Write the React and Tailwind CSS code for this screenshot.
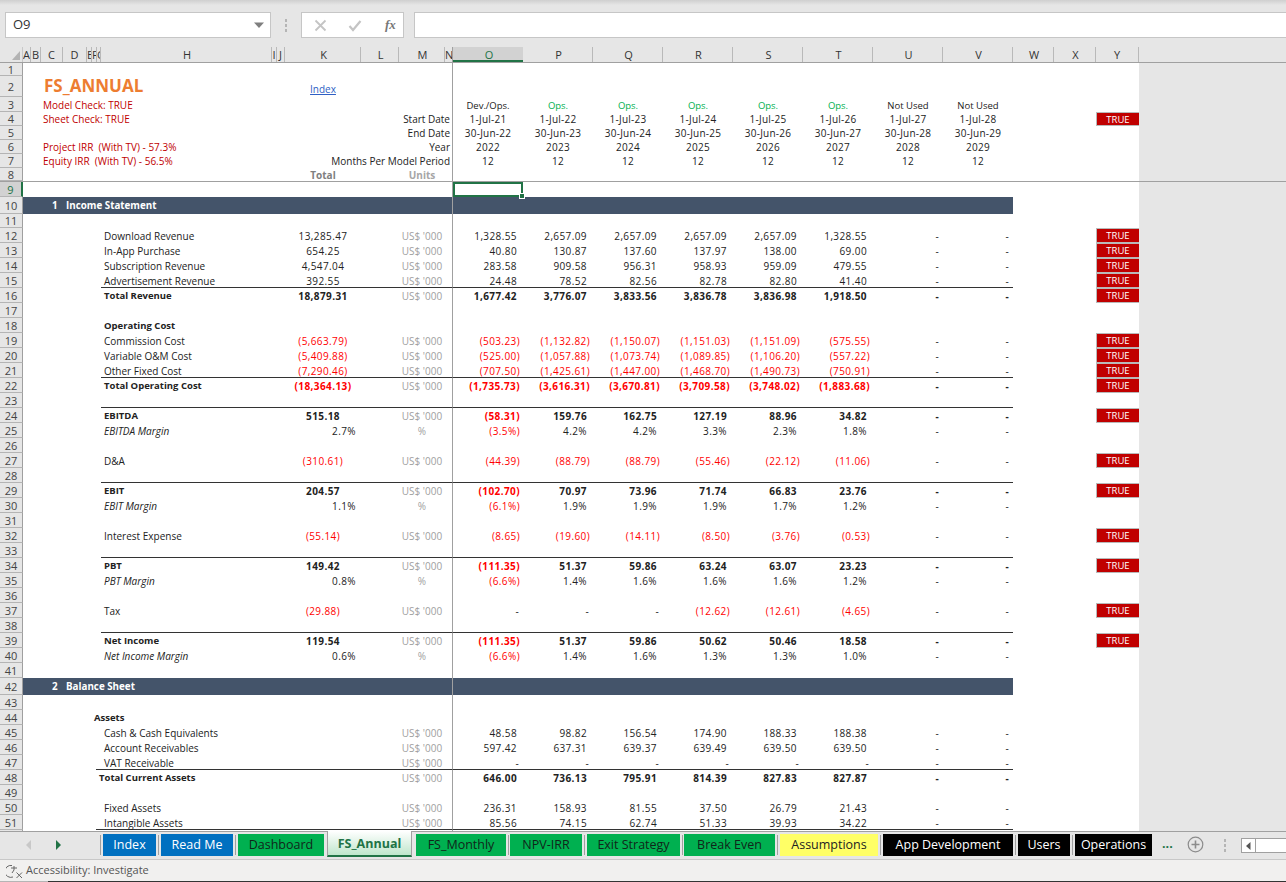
import React from "react";

const GRID = "grid grid-rows-[minmax(0,1fr)] grid-cols-[23px_262px_76px_38px_46px_8px_repeat(8,70px)_83px_43px_1fr]";
const HEADCOLS = "grid grid-cols-[23px_8px_10px_22px_24px_5px_5px_4px_171px_5px_8px_76px_38px_46px_8px_repeat(8,70px)_41px_42px_43px_1fr]";
const LETTERS = ["A","B","C","D","E","F","G","H","I","J","K","L","M","N","O","P","Q","R","S","T","U","V","W","X","Y"];
const NUM = "tracking-[0.4px]";

const U = "US$ '000";
const R = (n, label, total, vals, o = {}) => ({ n, label, total, vals, unit: U, ...o });

const rows = [
  { n: 11, h: 14 },
  R(12, "Download Revenue", "13,285.47", ["1,328.55","2,657.09","2,657.09","2,657.09","2,657.09","1,328.55"], { chk: 1 }),
  R(13, "In-App Purchase", "654.25", ["40.80","130.87","137.60","137.97","138.00","69.00"], { chk: 1 }),
  R(14, "Subscription Revenue", "4,547.04", ["283.58","909.58","956.31","958.93","959.09","479.55"], { chk: 1 }),
  R(15, "Advertisement Revenue", "392.55", ["24.48","78.52","82.56","82.78","82.80","41.40"], { chk: 1, rule: 1 }),
  R(16, "Total Revenue", "18,879.31", ["1,677.42","3,776.07","3,833.56","3,836.78","3,836.98","1,918.50"], { chk: 1, bold: 1 }),
  { n: 17 },
  { n: 18, label: "Operating Cost", bold: 1 },
  R(19, "Commission Cost", "(5,663.79)", ["(503.23)","(1,132.82)","(1,150.07)","(1,151.03)","(1,151.09)","(575.55)"], { chk: 1 }),
  R(20, "Variable O&M Cost", "(5,409.88)", ["(525.00)","(1,057.88)","(1,073.74)","(1,089.85)","(1,106.20)","(557.22)"], { chk: 1 }),
  R(21, "Other Fixed Cost", "(7,290.46)", ["(707.50)","(1,425.61)","(1,447.00)","(1,468.70)","(1,490.73)","(750.91)"], { chk: 1, rule: 1 }),
  R(22, "Total Operating Cost", "(18,364.13)", ["(1,735.73)","(3,616.31)","(3,670.81)","(3,709.58)","(3,748.02)","(1,883.68)"], { chk: 1, bold: 1 }),
  { n: 23, rule: 1 },
  R(24, "EBITDA", "515.18", ["(58.31)","159.76","162.75","127.19","88.96","34.82"], { chk: 1, bold: 1 }),
  R(25, "EBITDA Margin", "2.7%", ["(3.5%)","4.2%","4.2%","3.3%","2.3%","1.8%"], { margin: 1 }),
  { n: 26 },
  R(27, "D&A", "(310.61)", ["(44.39)","(88.79)","(88.79)","(55.46)","(22.12)","(11.06)"], { chk: 1 }),
  { n: 28, rule: 1 },
  R(29, "EBIT", "204.57", ["(102.70)","70.97","73.96","71.74","66.83","23.76"], { chk: 1, bold: 1 }),
  R(30, "EBIT Margin", "1.1%", ["(6.1%)","1.9%","1.9%","1.9%","1.7%","1.2%"], { margin: 1 }),
  { n: 31 },
  R(32, "Interest Expense", "(55.14)", ["(8.65)","(19.60)","(14.11)","(8.50)","(3.76)","(0.53)"], { chk: 1 }),
  { n: 33, rule: 1 },
  R(34, "PBT", "149.42", ["(111.35)","51.37","59.86","63.24","63.07","23.23"], { chk: 1, bold: 1 }),
  R(35, "PBT Margin", "0.8%", ["(6.6%)","1.4%","1.6%","1.6%","1.6%","1.2%"], { margin: 1 }),
  { n: 36 },
  R(37, "Tax", "(29.88)", ["-","-","-","(12.62)","(12.61)","(4.65)"], { chk: 1 }),
  { n: 38, rule: 1 },
  R(39, "Net Income", "119.54", ["(111.35)","51.37","59.86","50.62","50.46","18.58"], { chk: 1, bold: 1 }),
  R(40, "Net Income Margin", "0.6%", ["(6.6%)","1.4%","1.6%","1.3%","1.3%","1.0%"], { margin: 1 }),
  { n: 41 },
  { band: "Balance Sheet", num: "2", n: 42 },
  { n: 43 },
  { n: 44, label: "Assets", bold: 1, spacer: "w-[71px]", pad: "pl-0" },
  R(45, "Cash & Cash Equivalents", "", ["48.58","98.82","156.54","174.90","188.33","188.38"]),
  R(46, "Account Receivables", "", ["597.42","637.31","639.37","639.49","639.50","639.50"]),
  R(47, "VAT Receivable", "", ["-","-","-","-","-","-"], { rule: 1, spacer: "w-[73px]", pad: "pl-[8px]" }),
  R(48, "Total Current Assets", "", ["646.00","736.13","795.91","814.39","827.83","827.87"], { bold: 1, spacer: "w-[73px]", pad: "pl-[3px]" }),
  { n: 49 },
  R(50, "Fixed Assets", "", ["236.31","158.93","81.55","37.50","26.79","21.43"]),
  R(51, "Intangible Assets", "", ["85.56","74.15","62.74","51.33","39.93","34.22"], { rule: 1, spacer: "w-[73px]", pad: "pl-[8px]" }),
];

const GREEN = "bg-[#00b050] text-[#10261a]";
const BLACK = "bg-black text-white";
const BLUE = "bg-[#0070c0] text-white";
const tabs = [
  { t: "Index", w: "w-[53px]", c: BLUE, after: "sep" },
  { t: "Read Me", w: "w-[72px]", c: BLUE, after: "sep" },
  { t: "Dashboard", w: "w-[86px]", c: GREEN, after: "gap" },
  { t: "FS_Annual", active: 1 },
  { t: "FS_Monthly", w: "w-[90px]", c: GREEN, after: "sep4" },
  { t: "NPV-IRR", w: "w-[72px]", c: GREEN, after: "sep" },
  { t: "Exit Strategy", w: "w-[93px]", c: GREEN, after: "sep4" },
  { t: "Break Even", w: "w-[91px]", c: GREEN, after: "sep" },
  { t: "Assumptions", w: "w-[98px]", c: "bg-[#ffff66] text-[#222]", after: "sep" },
  { t: "App Development", w: "w-[130px]", c: BLACK, after: "sep" },
  { t: "Users", w: "w-[52px]", c: BLACK, after: "sep" },
  { t: "Operations", w: "w-[77px]", c: BLACK },
];

function RowHead({ n, sel }) {
  return (
    <div className={`h-full flex items-center justify-center border-b border-[#b4b4b4] text-[11px] leading-none ${sel ? "bg-[#d2d2d2] text-[#217346] border-r-2 border-r-[#217346]" : "bg-[#e6e6e6] text-[#444] border-r border-r-[#9f9f9f]"}`}>
      {n}
    </div>
  );
}

function ValueCell({ v, bold, rule }) {
  const neg = v && v.startsWith("(");
  const dash = v === "-";
  return (
    <div className={`h-full text-right leading-[16px] ${NUM} ${neg ? "pr-[3px] text-[#ff0000]" : dash ? "pr-[4px] text-[#222]" : "pr-[6px] text-[#222]"} ${bold ? "font-bold" : ""} ${rule ? "border-b border-[#333]" : ""}`}>
      {v}
    </div>
  );
}

function Check() {
  return (
    <div className="h-full bg-[#c00000] text-white text-center text-[9.5px] leading-[13px] border border-[#b9b9b9] border-r-0">TRUE</div>
  );
}

function DataRow({ r }) {
  if (r.band) return <BandRow n={r.n} num={r.num} title={r.band} />;
  const rb = r.rule ? "border-b border-[#333]" : "";
  const vals = r.vals ? [...r.vals, "-", "-"] : Array(8).fill("");
  const totalNeg = r.total && r.total.startsWith("(");
  return (
    <div className={`${GRID} ${r.h === 14 ? "h-[14px]" : "h-[15px]"}`}>
      <RowHead n={r.n} />
      <div className="flex h-full bg-white">
        <div className={`${r.spacer || "w-[78px]"} shrink-0`} />
        <div className={`flex-1 whitespace-nowrap leading-[16px] text-[#222] ${r.pad || "pl-[3px]"} ${rb} ${r.bold ? "font-bold text-[9.5px]" : ""} ${r.margin ? "italic" : ""}`}>{r.label}</div>
      </div>
      <div className={`bg-white leading-[16px] ${NUM} ${r.margin ? "text-right pr-[5px] text-[#222]" : totalNeg ? "text-center text-[#ff0000]" : "text-center text-[#222]"} ${r.bold ? "font-bold" : ""} ${rb}`}>{r.total}</div>
      <div className={`bg-white ${rb}`} />
      <div className={`bg-white text-center leading-[16px] text-[#a0a0a0] ${rb}`}>{r.margin ? "%" : r.unit}</div>
      <div className={`bg-white border-r border-r-[#a0a0a0] ${rb}`} />
      {vals.map((v, i) => (
        <div key={i} className="bg-white h-full">
          <ValueCell v={v} bold={r.bold} rule={r.rule} />
        </div>
      ))}
      <div className="bg-white" />
      <div className="bg-white">{r.chk ? <Check /> : null}</div>
      <div className="bg-[#e6e6e6]" />
    </div>
  );
}

function BandRow({ n, num, title }) {
  return (
    <div className={`${GRID} h-[17px]`}>
      <RowHead n={n} />
      <div className="col-span-4 bg-[#44546a] text-white font-bold text-[9.8px] leading-[18px] flex">
        <span className="w-[43px] pl-[29px] shrink-0">{num}</span>
        <span>{title}</span>
      </div>
      <div className="bg-[#44546a] border-r border-r-[#a0a0a0]" />
      <div className="col-span-8 bg-[#44546a]" />
      <div className="bg-white" />
      <div className="bg-white" />
      <div className="bg-[#e6e6e6]" />
    </div>
  );
}

function TopRow({ n, h = "h-[14px]", left, right, vals, vc, chk, vt = "tracking-[0.25px]", lead = "leading-[14px]" }) {
  return (
    <div className={`${GRID} ${h}`}>
      <RowHead n={n} />
      <div className={`bg-white whitespace-pre pl-[20px] ${lead} text-[#c00000]`}>{left}</div>
      <div className={`col-span-4 bg-white border-r border-r-[#a0a0a0] text-right pr-[2px] whitespace-nowrap ${lead} text-[#222]`}>{right}</div>
      {Array.from({ length: 8 }).map((_, i) => (
        <div key={i} className={`bg-white text-center ${lead} ${vt} ${vc ? vc[i] : "text-[#222]"}`}>{vals ? vals[i] : ""}</div>
      ))}
      <div className="bg-white" />
      <div className="bg-white">{chk ? <Check /> : null}</div>
      <div className="bg-[#e6e6e6]" />
    </div>
  );
}

function Sheet() {
  const phases = ["Dev./Ops.","Ops.","Ops.","Ops.","Ops.","Ops.","Not Used","Not Used"];
  const green = "text-[#00b050]";
  const phaseC = ["text-[#222]",green,green,green,green,green,"text-[#222]","text-[#222]"];
  return (
    <div className="bg-white text-[10px]">
      <div className={`${GRID} h-[13px]`}>
        <RowHead n={1} />
        <div className="col-span-4 bg-white" />
        <div className="bg-white border-r border-r-[#a0a0a0]" />
        <div className="col-span-8 bg-white" />
        <div className="col-span-2 bg-white" />
        <div className="bg-[#e6e6e6]" />
      </div>
      <div className={`${GRID} h-[21px]`}>
        <RowHead n={2} />
        <div className="bg-white pl-[21px] whitespace-nowrap text-[17px] font-bold text-[#ed7d31] leading-[20px]">FS_ANNUAL</div>
        <div className="bg-white text-center text-[#2f5fc4] underline leading-[26px]">Index</div>
        <div className="col-span-2 bg-white" />
        <div className="bg-white border-r border-r-[#a0a0a0]" />
        <div className="col-span-8 bg-white" />
        <div className="col-span-2 bg-white" />
        <div className="bg-[#e6e6e6]" />
      </div>
      <TopRow n={3} h="h-[15px]" left="Model Check: TRUE" vals={phases} vc={phaseC} vt="text-[9.5px]" lead="leading-[17px]" />
      <TopRow n={4} left="Sheet Check: TRUE" right="Start Date" vals={["1-Jul-21","1-Jul-22","1-Jul-23","1-Jul-24","1-Jul-25","1-Jul-26","1-Jul-27","1-Jul-28"]} chk />
      <TopRow n={5} right="End Date" vals={["30-Jun-22","30-Jun-23","30-Jun-24","30-Jun-25","30-Jun-26","30-Jun-27","30-Jun-28","30-Jun-29"]} />
      <TopRow n={6} left="Project IRR  (With TV) - 57.3%" right="Year" vals={["2022","2023","2024","2025","2026","2027","2028","2029"]} />
      <TopRow n={7} left="Equity IRR  (With TV) - 56.5%" right="Months Per Model Period" vals={Array(8).fill("12")} />
      <div className={`${GRID} h-[14px] border-b border-[#a0a0a0]`}>
        <RowHead n={8} />
        <div className="bg-white" />
        <div className="bg-white text-center font-bold text-[#808080] leading-[14px]">Total</div>
        <div className="bg-white" />
        <div className="bg-white text-center font-bold text-[#a6a6a6] leading-[14px]">Units</div>
        <div className="bg-white border-r border-r-[#a0a0a0]" />
        <div className="col-span-8 bg-white" />
        <div className="col-span-2 bg-white" />
        <div className="bg-[#e6e6e6]" />
      </div>
      <div className={`${GRID} h-[15px]`}>
        <RowHead n={9} sel />
        <div className="col-span-4 bg-white" />
        <div className="bg-white border-r border-r-[#a0a0a0]" />
        <div className="relative bg-white border-2 border-[#217346] z-10">
          <span className="absolute -right-[4px] -bottom-[4px] w-[6px] h-[6px] bg-[#217346] border border-white" />
        </div>
        <div className="col-span-7 bg-white" />
        <div className="col-span-2 bg-white" />
        <div className="bg-[#e6e6e6]" />
      </div>
      <BandRow n={10} num="1" title="Income Statement" />
      {rows.map((r) => <DataRow key={r.n} r={r} />)}
      <div className={`${GRID} h-[1px]`}>
        <div className="bg-[#e6e6e6] border-r border-r-[#9f9f9f]" />
        <div className="col-span-4 bg-white" />
        <div className="bg-white border-r border-r-[#a0a0a0]" />
        <div className="col-span-10 bg-white" />
        <div className="bg-[#e6e6e6]" />
      </div>
    </div>
  );
}

function ColHeaders() {
  return (
    <div className={`${HEADCOLS} h-[15px] bg-[#e6e6e6] border-b border-[#a0a0a0] box-content`}>
      <div className="border-r border-[#c8c8c8]">
        <svg width="23" height="15" viewBox="0 0 23 15">
          <path d="M20 4 L20 13 L12 13 Z" fill="#b3b3b3" />
        </svg>
      </div>
      {LETTERS.map((l, i) => (
        <div key={l} className={`overflow-hidden text-center text-[11px] leading-[15px] ${i >= 7 && l !== "I" && l !== "J" && l !== "N" && l !== "Y" ? "pl-[2px]" : ""} ${l === "O" ? "bg-[#d2d2d2] text-[#217346] border-b-2 border-[#217346]" : l === "N" ? "text-[#333] border-r border-r-[#a0a0a0]" : "text-[#333] border-r border-r-[#b9b9b9]"}`}>
          {l}
        </div>
      ))}
      <div />
    </div>
  );
}

function Toolbar() {
  return (
    <div className="h-[47px] bg-[#e6e6e6] bg-gradient-to-b from-[#cfcfcf] to-[#e6e6e6] bg-[length:100%_5px] bg-no-repeat flex items-start pt-[12px] pl-[5px]">
      <div className="w-[266px] h-[26px] bg-white border border-[#c6c6c6] flex items-center justify-between pl-[7px] pr-[5px] text-[13px] text-[#333]">
        <span>O9</span>
        <svg width="12" height="8" viewBox="0 0 12 8"><path d="M1 1.5 L11 1.5 L6 7 Z" fill="#7f7f7f" /></svg>
      </div>
      <div className="w-[30px] h-[26px] flex flex-col items-center justify-center gap-[2px]">
        {[0,1,2].map((i) => <span key={i} className="w-[2px] h-[3px] bg-[#b5b5b5]" />)}
      </div>
      <div className="w-[103px] h-[26px] bg-white border border-[#c6c6c6] flex items-center">
        <svg className="ml-[12px]" width="13" height="13" viewBox="0 0 13 13"><path d="M1.5 1.5 L11.5 11.5 M11.5 1.5 L1.5 11.5" stroke="#c4c4c4" strokeWidth="1.8" fill="none" /></svg>
        <svg className="ml-[21px]" width="14" height="13" viewBox="0 0 14 13"><path d="M1.5 7 L5 11 L12.5 2" stroke="#c4c4c4" strokeWidth="2.2" fill="none" /></svg>
        <span className="ml-[23px] text-[13px] italic font-bold text-[#777] font-['Liberation_Serif',serif]">fx</span>
      </div>
      <div className="ml-[10px] flex-1 h-[26px] bg-white border border-[#c6c6c6] border-r-0" />
    </div>
  );
}

function TabBar() {
  return (
    <div className="h-[27px] bg-[#e6e6e6] border-t border-[#a0a0a0] border-b border-b-[#c8c8c8] box-content flex items-start text-[12.5px]">
      <div className="w-[100px] h-[25px] flex items-center shrink-0">
        <svg className="ml-[26px]" width="6" height="10" viewBox="0 0 6 10"><path d="M5 0 L5 10 L0 5 Z" fill="#c8c8c8" /></svg>
        <svg className="ml-[23px]" width="6" height="10" viewBox="0 0 6 10"><path d="M1 0 L1 10 L6 5 Z" fill="#217346" /></svg>
      </div>
      <div className="h-[20px] w-[1px] mt-[3px] bg-[#a0a0a0] mr-[2px] shrink-0" />
      {tabs.map((t) =>
        t.active ? (
          <div key={t.t} className="w-[85px] h-[26px] -mt-[1px] mr-[4px] bg-gradient-to-b from-white to-[#bfe6cc] border-x border-[#a0a0a0] border-b-2 border-b-[#217346] text-center font-bold text-[#217346] leading-[25px] shrink-0">FS_Annual</div>
        ) : (
          <React.Fragment key={t.t}>
            <div className={`${t.w} ${t.c} h-[22px] mt-[2px] text-center leading-[22px] whitespace-nowrap shrink-0`}>{t.t}</div>
            {t.after === "gap" ? <div className="w-[3px] shrink-0" /> : null}
            {t.after === "sep" ? <div className="w-[1px] h-[20px] mt-[3px] mx-[2px] bg-[#a0a0a0] shrink-0" /> : null}
            {t.after === "sep4" ? <div className="w-[1px] h-[20px] mt-[3px] mx-[1.5px] bg-[#a0a0a0] shrink-0" /> : null}
          </React.Fragment>
        )
      )}
      <span className="w-[35px] pl-[10px] text-[#217346] font-bold leading-[24px] shrink-0">...</span>
      <svg className="mt-[4px] shrink-0" width="17" height="17" viewBox="0 0 17 17"><circle cx="8.5" cy="8.5" r="7.3" stroke="#8c8c8c" strokeWidth="1.2" fill="none" /><path d="M8.5 4.5 V12.5 M4.5 8.5 H12.5" stroke="#8c8c8c" strokeWidth="1.6" /></svg>
      <div className="ml-[20px] mt-[7px] flex flex-col gap-[2px] shrink-0">
        {[0,1,2].map((i) => <span key={i} className="w-[2px] h-[3px] bg-[#b5b5b5]" />)}
      </div>
      <div className="ml-[15px] mt-[6px] h-[15px] flex-1 flex border border-[#a0a0a0] border-r-0 bg-white min-w-0">
        <div className="w-[14px] flex items-center justify-center border-r border-[#a0a0a0]">
          <svg width="5" height="8" viewBox="0 0 5 8"><path d="M4.5 0 L4.5 8 L0 4 Z" fill="#555" /></svg>
        </div>
      </div>
    </div>
  );
}

function StatusBar() {
  return (
    <div>
      <div className="h-[21px] bg-[#f1f0ef] flex items-center pl-[6px] text-[11px] text-[#555]">
        <svg width="18" height="16" viewBox="0 0 18 16" fill="none" stroke="#666" strokeWidth="1">
          <path d="M6 2.5 A6 6 0 1 0 7 14" />
          <path d="M8 3 V7 M5 5 H11 M8 7 L6 10" />
          <path d="M10.5 9.5 L16 15 M16 9.5 L10.5 15" />
        </svg>
        <span className="ml-[2px]">Accessibility: Investigate</span>
      </div>
      <div className="h-[1px] flex">
        <div className="w-[48px] bg-[#b5b5b5]" />
        <div className="flex-1 bg-[#333]" />
      </div>
    </div>
  );
}

export default function App() {
  return (
    <div className="w-[1286px] h-[882px] overflow-hidden bg-[#e6e6e6] font-['Open_Sans','Noto_Sans',sans-serif]">
      <Toolbar />
      <ColHeaders />
      <Sheet />
      <TabBar />
      <StatusBar />
    </div>
  );
}
